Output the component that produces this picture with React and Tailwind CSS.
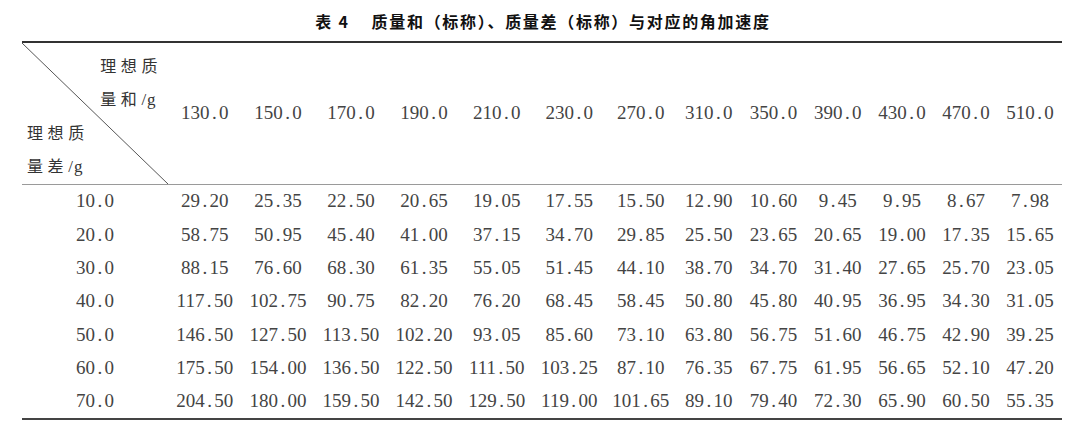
import React from "react";

const COLS =
  "grid grid-cols-[146px_73.5px_73px_73px_73px_72.5px_72.5px_70.5px_65.5px_64px_64.5px_64px_64px_64px]";

const SUMS = ["130.0", "150.0", "170.0", "190.0", "210.0", "230.0", "270.0", "310.0", "350.0", "390.0", "430.0", "470.0", "510.0"];

const ROWS = [
  ["10.0", ["29.20", "25.35", "22.50", "20.65", "19.05", "17.55", "15.50", "12.90", "10.60", "9.45", "9.95", "8.67", "7.98"]],
  ["20.0", ["58.75", "50.95", "45.40", "41.00", "37.15", "34.70", "29.85", "25.50", "23.65", "20.65", "19.00", "17.35", "15.65"]],
  ["30.0", ["88.15", "76.60", "68.30", "61.35", "55.05", "51.45", "44.10", "38.70", "34.70", "31.40", "27.65", "25.70", "23.05"]],
  ["40.0", ["117.50", "102.75", "90.75", "82.20", "76.20", "68.45", "58.45", "50.80", "45.80", "40.95", "36.95", "34.30", "31.05"]],
  ["50.0", ["146.50", "127.50", "113.50", "102.20", "93.05", "85.60", "73.10", "63.80", "56.75", "51.60", "46.75", "42.90", "39.25"]],
  ["60.0", ["175.50", "154.00", "136.50", "122.50", "111.50", "103.25", "87.10", "76.35", "67.75", "61.95", "56.65", "52.10", "47.20"]],
  ["70.0", ["204.50", "180.00", "159.50", "142.50", "129.50", "119.00", "101.65", "89.10", "79.40", "72.30", "65.90", "60.50", "55.35"]],
];

// 宋体式的半角句点：数字后面留出半格
function Num({ v }) {
  const [a, b] = v.split(".");
  return (
    <span className="whitespace-nowrap">
      {a}
      <span className="inline-block w-[9.5px] text-center">.</span>
      {b}
    </span>
  );
}

function Cell({ children }) {
  return <div className="flex items-center justify-center whitespace-nowrap">{children}</div>;
}

function Label({ a, b }) {
  return (
    <div className="whitespace-nowrap">
      <div className="tracking-[4.6px]">{a}</div>
      <div>
        <span className="tracking-[4.6px]">{b}</span>
        <span className="font-['Liberation_Serif',serif] text-[17px] tracking-[1px]">/g</span>
      </div>
    </div>
  );
}

export default function App() {
  return (
    <div className="w-[1080px] h-[443px] bg-white overflow-hidden font-['Liberation_Serif','Noto_Sans_CJK_SC',serif] text-[19px] text-[#444]">
      <div className="h-[41px] flex items-center justify-center pl-[6px] font-['Noto_Sans_CJK_SC',sans-serif] font-bold text-[16px] tracking-[1.7px] text-[#111]">
        <span>表 4</span>
        <span className="ml-[22px]">质量和（标称）、质量差（标称）与对应的角加速度</span>
      </div>

      <div className="ml-[22px] w-[1040px] border-t-2 border-b-2 border-t-[#333] border-b-[#444]">
        <div className={COLS + " h-[142px] border-b border-[#9a9a9a]"}>
          <div className="relative h-[141px] flex flex-col justify-between pt-[6px] pb-[2px] font-['Noto_Sans_CJK_SC',sans-serif] text-[16px] leading-[33px] text-[#333]">
            <svg className="absolute inset-0 w-full h-full" preserveAspectRatio="none" viewBox="0 0 146 142">
              <line x1="0" y1="0" x2="146" y2="142" stroke="#555" strokeWidth="1" />
            </svg>
            <div className="self-end pr-[6px]">
              <Label a="理想质" b="量和" />
            </div>
            <div className="pl-[5px]">
              <Label a="理想质" b="量差" />
            </div>
          </div>
          {SUMS.map((s) => (
            <Cell key={s}>
              <Num v={s} />
            </Cell>
          ))}
        </div>

        {ROWS.map(([diff, vals]) => (
          <div key={diff} className={COLS + " h-[33.3px]"}>
            <Cell>
              <Num v={diff} />
            </Cell>
            {vals.map((v, i) => (
              <Cell key={i}>
                <Num v={v} />
              </Cell>
            ))}
          </div>
        ))}
      </div>
    </div>
  );
}
